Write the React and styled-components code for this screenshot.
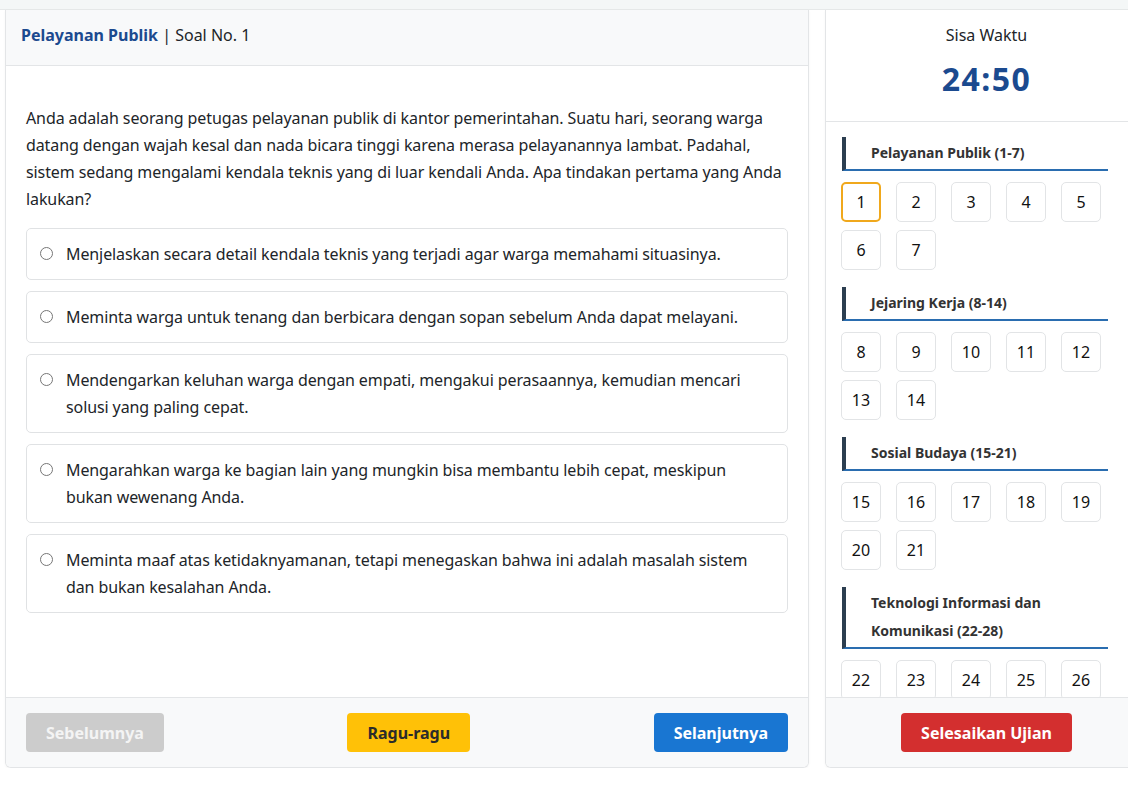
import React from "react";
import styled, { createGlobalStyle } from "styled-components";

const GlobalStyle = createGlobalStyle`
  html, body {
    margin: 0;
    padding: 0;
    background: #fff;
    overflow: hidden;
  }
  body {
    font-family: "Noto Sans", "Open Sans", sans-serif;
    color: #212529;
  }
  * { box-sizing: border-box; }
`;

const question =
  "Anda adalah seorang petugas pelayanan publik di kantor pemerintahan. Suatu hari, seorang warga datang dengan wajah kesal dan nada bicara tinggi karena merasa pelayanannya lambat. Padahal, sistem sedang mengalami kendala teknis yang di luar kendali Anda. Apa tindakan pertama yang Anda lakukan?";

const options = [
  "Menjelaskan secara detail kendala teknis yang terjadi agar warga memahami situasinya.",
  "Meminta warga untuk tenang dan berbicara dengan sopan sebelum Anda dapat melayani.",
  "Mendengarkan keluhan warga dengan empati, mengakui perasaannya, kemudian mencari solusi yang paling cepat.",
  "Mengarahkan warga ke bagian lain yang mungkin bisa membantu lebih cepat, meskipun bukan wewenang Anda.",
  "Meminta maaf atas ketidaknyamanan, tetapi menegaskan bahwa ini adalah masalah sistem dan bukan kesalahan Anda.",
];

const sections = [
  { title: "Pelayanan Publik (1-7)", from: 1, to: 7 },
  { title: "Jejaring Kerja (8-14)", from: 8, to: 14 },
  { title: "Sosial Budaya (15-21)", from: 15, to: 21 },
  { title: "Teknologi Informasi dan Komunikasi (22-28)", from: 22, to: 28 },
];

export default function App() {
  const current = 1;
  return (
    <>
      <GlobalStyle />
      <TopStrip />
      <Page>
        <QuestionCard>
          <CardHeader>
            <Category>Pelayanan Publik</Category> | Soal No. 1
          </CardHeader>
          <QuestionBody>
            <QuestionText>{question}</QuestionText>
            <OptionList>
              {options.map((o, i) => (
                <Option key={i}>
                  <Radio type="radio" name="answer" />
                  <span>{o}</span>
                </Option>
              ))}
            </OptionList>
          </QuestionBody>
          <CardFooter>
            <Button $variant="disabled">Sebelumnya</Button>
            <Button $variant="warning">Ragu-ragu</Button>
            <Button $variant="primary">Selanjutnya</Button>
          </CardFooter>
        </QuestionCard>

        <SideCard>
          <Timer>
            <TimerLabel>Sisa Waktu</TimerLabel>
            <TimerValue>24:50</TimerValue>
          </Timer>
          <Nav>
            {sections.map((s) => {
              const nums = [];
              for (let n = s.from; n <= s.to; n++) nums.push(n);
              return (
                <Section key={s.title}>
                  <SectionTitle>{s.title}</SectionTitle>
                  <NumGrid>
                    {nums.map((n) => (
                      <NumButton key={n} $active={n === current}>
                        {n}
                      </NumButton>
                    ))}
                  </NumGrid>
                </Section>
              );
            })}
          </Nav>
          <SideFooter>
            <Button $variant="danger">Selesaikan Ujian</Button>
          </SideFooter>
        </SideCard>
      </Page>
    </>
  );
}

const TopStrip = styled.div`
  height: 10px;
  background: #f4f7f7;
  border-bottom: 1px solid #e6e9e9;
`;

const Page = styled.div`
  display: flex;
  gap: 16px;
  padding: 0 0 0 5px;
  width: 1160px;
  height: 758px;
`;

const Card = styled.div`
  background: #fff;
  border: 1px solid #e3e5e7;
  border-top: none;
  border-radius: 0 0 6px 6px;
  box-shadow: 0 1px 3px rgba(0, 0, 0, 0.04);
  display: flex;
  flex-direction: column;
  overflow: hidden;
`;

const QuestionCard = styled(Card)`
  width: 804px;
  flex-shrink: 0;
`;

const CardHeader = styled.div`
  height: 56px;
  padding: 14px 15px 0;
  display: flex;
  align-items: flex-start;
  background: #f8f9fa;
  border-bottom: 1px solid #e3e5e7;
  font-size: 16px;
  line-height: 22px;
  white-space: pre;
`;

const Category = styled.strong`
  color: #1b4a8f;
  font-weight: 700;
`;

const QuestionBody = styled.div`
  flex: 1;
  padding: 39px 20px 0 20px;
`;

const QuestionText = styled.p`
  margin: 0 0 15px;
  font-size: 16px;
  line-height: 27px;
  letter-spacing: -0.1px;
`;

const OptionList = styled.div`
  display: flex;
  flex-direction: column;
  gap: 11px;
`;

const Option = styled.label`
  display: flex;
  align-items: flex-start;
  gap: 13px;
  padding: 12px 20px 11px 13px;
  border: 1px solid #e0e2e4;
  border-radius: 5px;
  font-size: 16px;
  line-height: 27px;
  letter-spacing: -0.1px;
  cursor: pointer;
`;

const Radio = styled.input`
  margin: 6px 0 0 0;
  width: 13px;
  height: 13px;
  flex-shrink: 0;
`;

const CardFooter = styled.div`
  height: 70px;
  padding: 0 20px;
  display: flex;
  align-items: center;
  justify-content: space-between;
  background: #f8f9fa;
  border-top: 1px solid #e3e5e7;
`;

const variants = {
  disabled: "background: #cccccc; color: #f4f4f4;",
  warning: "background: #ffc107; color: #2b2b2b;",
  primary: "background: #1976d2; color: #fff;",
  danger: "background: #d32f2f; color: #fff;",
};

const Button = styled.button`
  height: 39px;
  padding: 0 20px;
  border: none;
  border-radius: 4px;
  font-family: "Noto Sans", "Open Sans", sans-serif;
  font-size: 16px;
  font-weight: 700;
  cursor: pointer;
  ${(p) => variants[p.$variant]}
`;

const SideCard = styled(Card)`
  width: 323px;
  flex-shrink: 0;
`;

const Timer = styled.div`
  height: 112px;
  border-bottom: 1px solid #e3e5e7;
  display: flex;
  flex-direction: column;
  align-items: center;
  padding-top: 14px;
`;

const TimerLabel = styled.div`
  font-size: 16px;
  line-height: 22px;
`;

const TimerValue = styled.div`
  margin-top: 11px;
  font-family: "Noto Sans", "Open Sans", sans-serif;
  font-size: 32px;
  line-height: 44px;
  font-weight: 700;
  color: #1b4a8f;
  letter-spacing: 1.5px;
`;

const Nav = styled.div`
  flex: 1;
  overflow: hidden;
  padding: 15px 39px 0 15px;
`;

const Section = styled.div`
  margin-bottom: 17px;
`;

const SectionTitle = styled.div`
  border-left: 4px solid #2c3e50;
  border-bottom: 2px solid #2a6db0;
  padding: 2px 10px 2px 25px;
  font-size: 14px;
  font-weight: 700;
  line-height: 28px;
  color: #333;
  margin-left: 1px;
`;

const NumGrid = styled.div`
  display: flex;
  flex-wrap: wrap;
  gap: 8px 15px;
  margin-top: 11px;
`;

const NumButton = styled.button`
  width: 40px;
  height: 40px;
  border-radius: 5px;
  background: #fff;
  border: ${(p) => (p.$active ? "2px solid #f0a81c" : "1px solid #e2e4e6")};
  font-family: "Noto Sans", "Open Sans", sans-serif;
  font-size: 16px;
  color: #111;
  padding: 0;
  cursor: pointer;
`;

const SideFooter = styled.div`
  height: 70px;
  display: flex;
  align-items: center;
  justify-content: center;
  background: #f8f9fa;
  border-top: 1px solid #e3e5e7;
`;
